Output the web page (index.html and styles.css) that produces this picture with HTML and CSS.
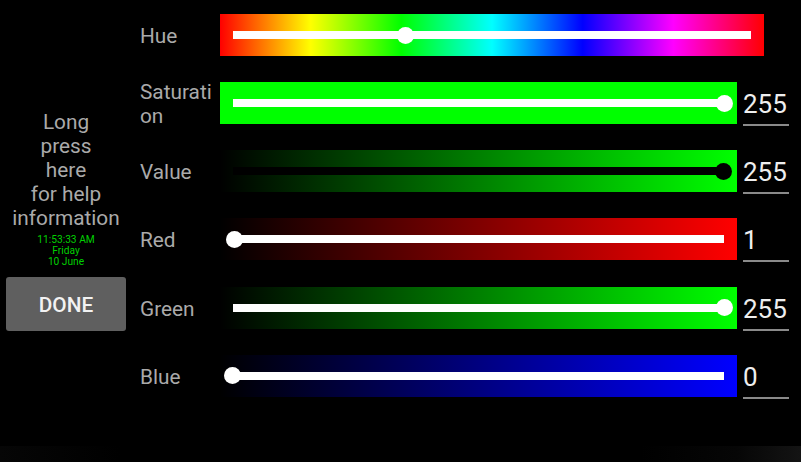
FILE: index.html
```html
<html>
<head>
  <title>Colour Picker</title>
  <link rel="stylesheet" href="styles.css">
</head>
<body>
  <div class="screen">
    <div class="side">
      <p class="help">Long<br>press<br>here<br>for help<br>information</p>
      <p class="clock">11:53:33 AM<br>Friday<br>10 June</p>
      <button type="button" class="done">DONE</button>
    </div>

    <div class="rows">
      <div class="row">
        <span class="label">Hue</span>
        <div class="bar bar-wide hue">
          <div class="track"><span class="thumb" style="left: 33.3%"></span></div>
        </div>
      </div>
      <div class="row">
        <span class="label">Saturation</span>
        <div class="bar saturation">
          <div class="track"><span class="thumb" style="left: 100%"></span></div>
        </div>
        <span class="value">255</span>
      </div>
      <div class="row">
        <span class="label">Value</span>
        <div class="bar green-fade">
          <div class="track dark"><span class="thumb" style="left: 100%"></span></div>
        </div>
        <span class="value">255</span>
      </div>
      <div class="row">
        <span class="label">Red</span>
        <div class="bar red-fade">
          <div class="track"><span class="thumb" style="left: 0.4%"></span></div>
        </div>
        <span class="value">1</span>
      </div>
      <div class="row">
        <span class="label">Green</span>
        <div class="bar green-fade">
          <div class="track"><span class="thumb" style="left: 100%"></span></div>
        </div>
        <span class="value">255</span>
      </div>
      <div class="row">
        <span class="label">Blue</span>
        <div class="bar blue-fade">
          <div class="track"><span class="thumb" style="left: 0%"></span></div>
        </div>
        <span class="value">0</span>
      </div>
    </div>
  </div>
  <div class="nav-strip"></div>
</body>
</html>
```

FILE: styles.css
```css
html, body {
  margin: 0;
  padding: 0;
  background-color: #000000;
}

body {
  width: 801px;
  height: 462px;
  overflow: hidden;
  font-family: Roboto, "Liberation Sans", sans-serif;
}

.screen {
  display: flex;
  height: 446px;
}

/* Left column */
.side {
  width: 132px;
  flex-shrink: 0;
  padding-top: 110px;
  box-sizing: border-box;
  text-align: center;
}

.help {
  margin: 0;
  font-size: 20.8px;
  line-height: 24px;
  color: #aaaaaa;
}

.clock {
  margin: 4px 0 0;
  font-size: 10.2px;
  line-height: 11px;
  color: #00d000;
}

.done {
  display: block;
  width: 120px;
  height: 54px;
  margin: 10px 0 0 6px;
  padding: 2px 0 0;
  border: none;
  border-radius: 3px;
  background-color: #5f5f5f;
  color: #f2f2f2;
  font-family: inherit;
  font-size: 20.8px;
  font-weight: 500;
}

/* Slider rows */
.rows {
  display: flex;
  flex-direction: column;
  gap: 26.15px;
  padding: 14px 0 0 8px;
}

.row {
  display: flex;
  align-items: center;
  height: 42px;
}

.label {
  width: 76px;
  margin-top: 2px;
  margin-right: 3.5px;
  font-size: 20.8px;
  line-height: 24px;
  color: #aaaaaa;
  word-break: break-all;
}

.bar {
  display: flex;
  align-items: center;
  width: 517.5px;
  height: 42px;
  padding: 0 13px;
  box-sizing: border-box;
}

.bar-wide {
  width: 544px;
  margin-left: 0.5px;
}

.hue {
  background: linear-gradient(to right, #ff0000, #ffff00, #00ff00, #00ffff, #0000ff, #ff00ff, #ff0000);
}

.saturation {
  background-color: #00ff00;
}

.green-fade {
  background: linear-gradient(to right, #000000, #00ff00);
}

.red-fade {
  background: linear-gradient(to right, #000000, #ff0000);
}

.blue-fade {
  background: linear-gradient(to right, #000000, #0000ff);
}

.track {
  position: relative;
  flex: 1;
  height: 8px;
  background-color: #ffffff;
}

.track.dark {
  background-color: #000000;
}

.thumb {
  position: absolute;
  top: 50%;
  width: 17px;
  height: 17px;
  margin: -8.5px 0 0 -8.5px;
  border-radius: 50%;
  background-color: #ffffff;
}

.track.dark .thumb {
  background-color: #000000;
  margin-left: -9.5px;
}

.value {
  width: 46px;
  height: 44px;
  margin: 2px 0 0 6px;
  box-sizing: border-box;
  border-bottom: 2px solid #8a8a8a;
  font-size: 26px;
  line-height: 45px;
  color: #eeeeee;
}

.nav-strip {
  height: 16px;
  background: linear-gradient(to right, #060606, #000000 15%, #000000 80%, #060606 92%, #141414);
}
```
